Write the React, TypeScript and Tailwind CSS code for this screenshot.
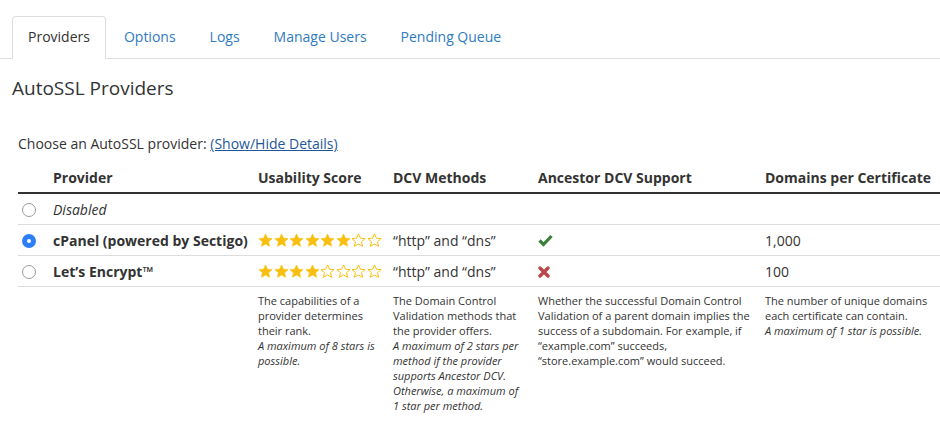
const font = { fontFamily: '"Open Sans", "Liberation Sans", sans-serif' };

const tabs = ['Providers', 'Options', 'Logs', 'Manage Users', 'Pending Queue'];

function Star({ filled }: { filled: boolean }) {
  return (
    <svg width="15" height="15" viewBox="0 0 24 24" className="shrink-0">
      <polygon
        points="12,1.5 15.1,8.3 22.5,9 16.9,14 18.5,21.3 12,17.5 5.5,21.3 7.1,14 1.5,9 8.9,8.3"
        fill={filled ? '#f9bf0f' : '#ffffff'}
        stroke="#f9bf0f"
        strokeWidth={filled ? 1 : 1.6}
        strokeLinejoin="round"
      />
    </svg>
  );
}

function Stars({ n }: { n: number }) {
  return (
    <div className="flex gap-[0.5px]">
      {Array.from({ length: 8 }).map((_, i) => (
        <Star key={i} filled={i < n} />
      ))}
    </div>
  );
}

function Radio({ checked }: { checked?: boolean }) {
  return checked ? (
    <span className="flex h-[14px] w-[14px] items-center justify-center rounded-full bg-[#2d7ff9]">
      <span className="h-[4px] w-[4px] rounded-full bg-white" />
    </span>
  ) : (
    <span className="block h-[14px] w-[14px] rounded-full border border-[#9a9a9a] bg-white" />
  );
}

function Check() {
  return (
    <svg width="15" height="13" viewBox="0 0 15 13">
      <path d="M1.5 6.5 L5.5 10.5 L13.5 2" fill="none" stroke="#3b8135" strokeWidth="3.2" />
    </svg>
  );
}

function Cross() {
  return (
    <svg width="12" height="12" viewBox="0 0 12 12">
      <path d="M2 2 L10 10 M10 2 L2 10" fill="none" stroke="#b94a48" strokeWidth="3.4" strokeLinecap="round" />
    </svg>
  );
}

export default function App() {
  return (
    <div className="h-[426px] w-[940px] overflow-hidden bg-white text-[#333]" style={font}>
      <div className="pt-4">
        <div className="flex gap-0.5 border-b border-[#ddd] pl-3">
          {tabs.map((t, i) => (
            <div
              key={t}
              className={
                i === 0
                  ? '-mb-px rounded-t border border-[#ddd] border-b-white bg-white px-[15px] py-[10px] text-[14px] leading-[20px] text-[#333]'
                  : 'px-4 py-[11px] text-[14px] leading-[20px] text-[#2f7bbf]'
              }
            >
              {t}
            </div>
          ))}
        </div>

        <h1 className="ml-3 mt-[16px] text-[19px] leading-[26px]">AutoSSL Providers</h1>

        <div className="ml-[18px] mt-[33px] text-[14px] leading-[20px]">
          Choose an AutoSSL provider:{' '}
          <a className="text-[#1e5799] underline">(Show/Hide Details)</a>
        </div>

        <table className="ml-[18px] mt-[9px] w-[922px] table-fixed border-collapse text-[14px]">
          <colgroup>
            <col className="w-[35px]" />
            <col className="w-[205px]" />
            <col className="w-[135px]" />
            <col className="w-[145px]" />
            <col className="w-[227px]" />
            <col />
          </colgroup>
          <thead>
            <tr className="border-b-2 border-[#333]">
              <th />
              <th className="h-[30px] text-left align-middle font-bold">Provider</th>
              <th className="text-left font-bold">Usability Score</th>
              <th className="text-left font-bold">DCV Methods</th>
              <th className="text-left font-bold">Ancestor DCV Support</th>
              <th className="text-left font-bold">Domains per Certificate</th>
            </tr>
          </thead>
          <tbody>
            <tr className="border-b border-[#ddd]">
              <td className="h-[31px] pl-1 pt-0.5">
                <Radio />
              </td>
              <td className="pt-0.5 italic">Disabled</td>
              <td />
              <td />
              <td />
              <td />
            </tr>
            <tr className="border-b border-[#ddd]">
              <td className="h-[31px] pl-1 pt-0.5">
                <Radio checked />
              </td>
              <td className="pt-0.5 font-bold">cPanel (powered by Sectigo)</td>
              <td className="pt-0.5">
                <Stars n={6} />
              </td>
              <td className="pt-0.5">“http” and “dns”</td>
              <td className="pt-0.5">
                <Check />
              </td>
              <td className="pt-0.5">1,000</td>
            </tr>
            <tr className="border-b border-[#ddd]">
              <td className="h-[31px] pl-1 pt-0.5">
                <Radio />
              </td>
              <td className="pt-0.5 font-bold">Let’s Encrypt™</td>
              <td className="pt-0.5">
                <Stars n={4} />
              </td>
              <td className="pt-0.5">“http” and “dns”</td>
              <td className="pt-0.5">
                <Cross />
              </td>
              <td className="pt-0.5">100</td>
            </tr>
            <tr className="align-top text-[11px] leading-[15px]">
              <td />
              <td />
              <td className="pr-1 pt-[6px]">
                The capabilities of a provider determines their rank.
                <div className="italic">A maximum of 8 stars is possible.</div>
              </td>
              <td className="pr-3 pt-[6px]">
                The Domain Control Validation methods that the provider offers.
                <div className="italic">
                  A maximum of 2 stars per method if the provider supports Ancestor DCV. Otherwise, a maximum of 1 star per method.
                </div>
              </td>
              <td className="pr-1 pt-[6px]">
                Whether the successful Domain Control Validation of a parent domain implies the success of a subdomain. For
                example, if “example.com” succeeds, “store.example.com” would succeed.
              </td>
              <td className="pr-1 pt-[6px]">
                The number of unique domains each certificate can contain.
                <div className="italic">A maximum of 1 star is possible.</div>
              </td>
            </tr>
          </tbody>
        </table>
      </div>
    </div>
  );
}
